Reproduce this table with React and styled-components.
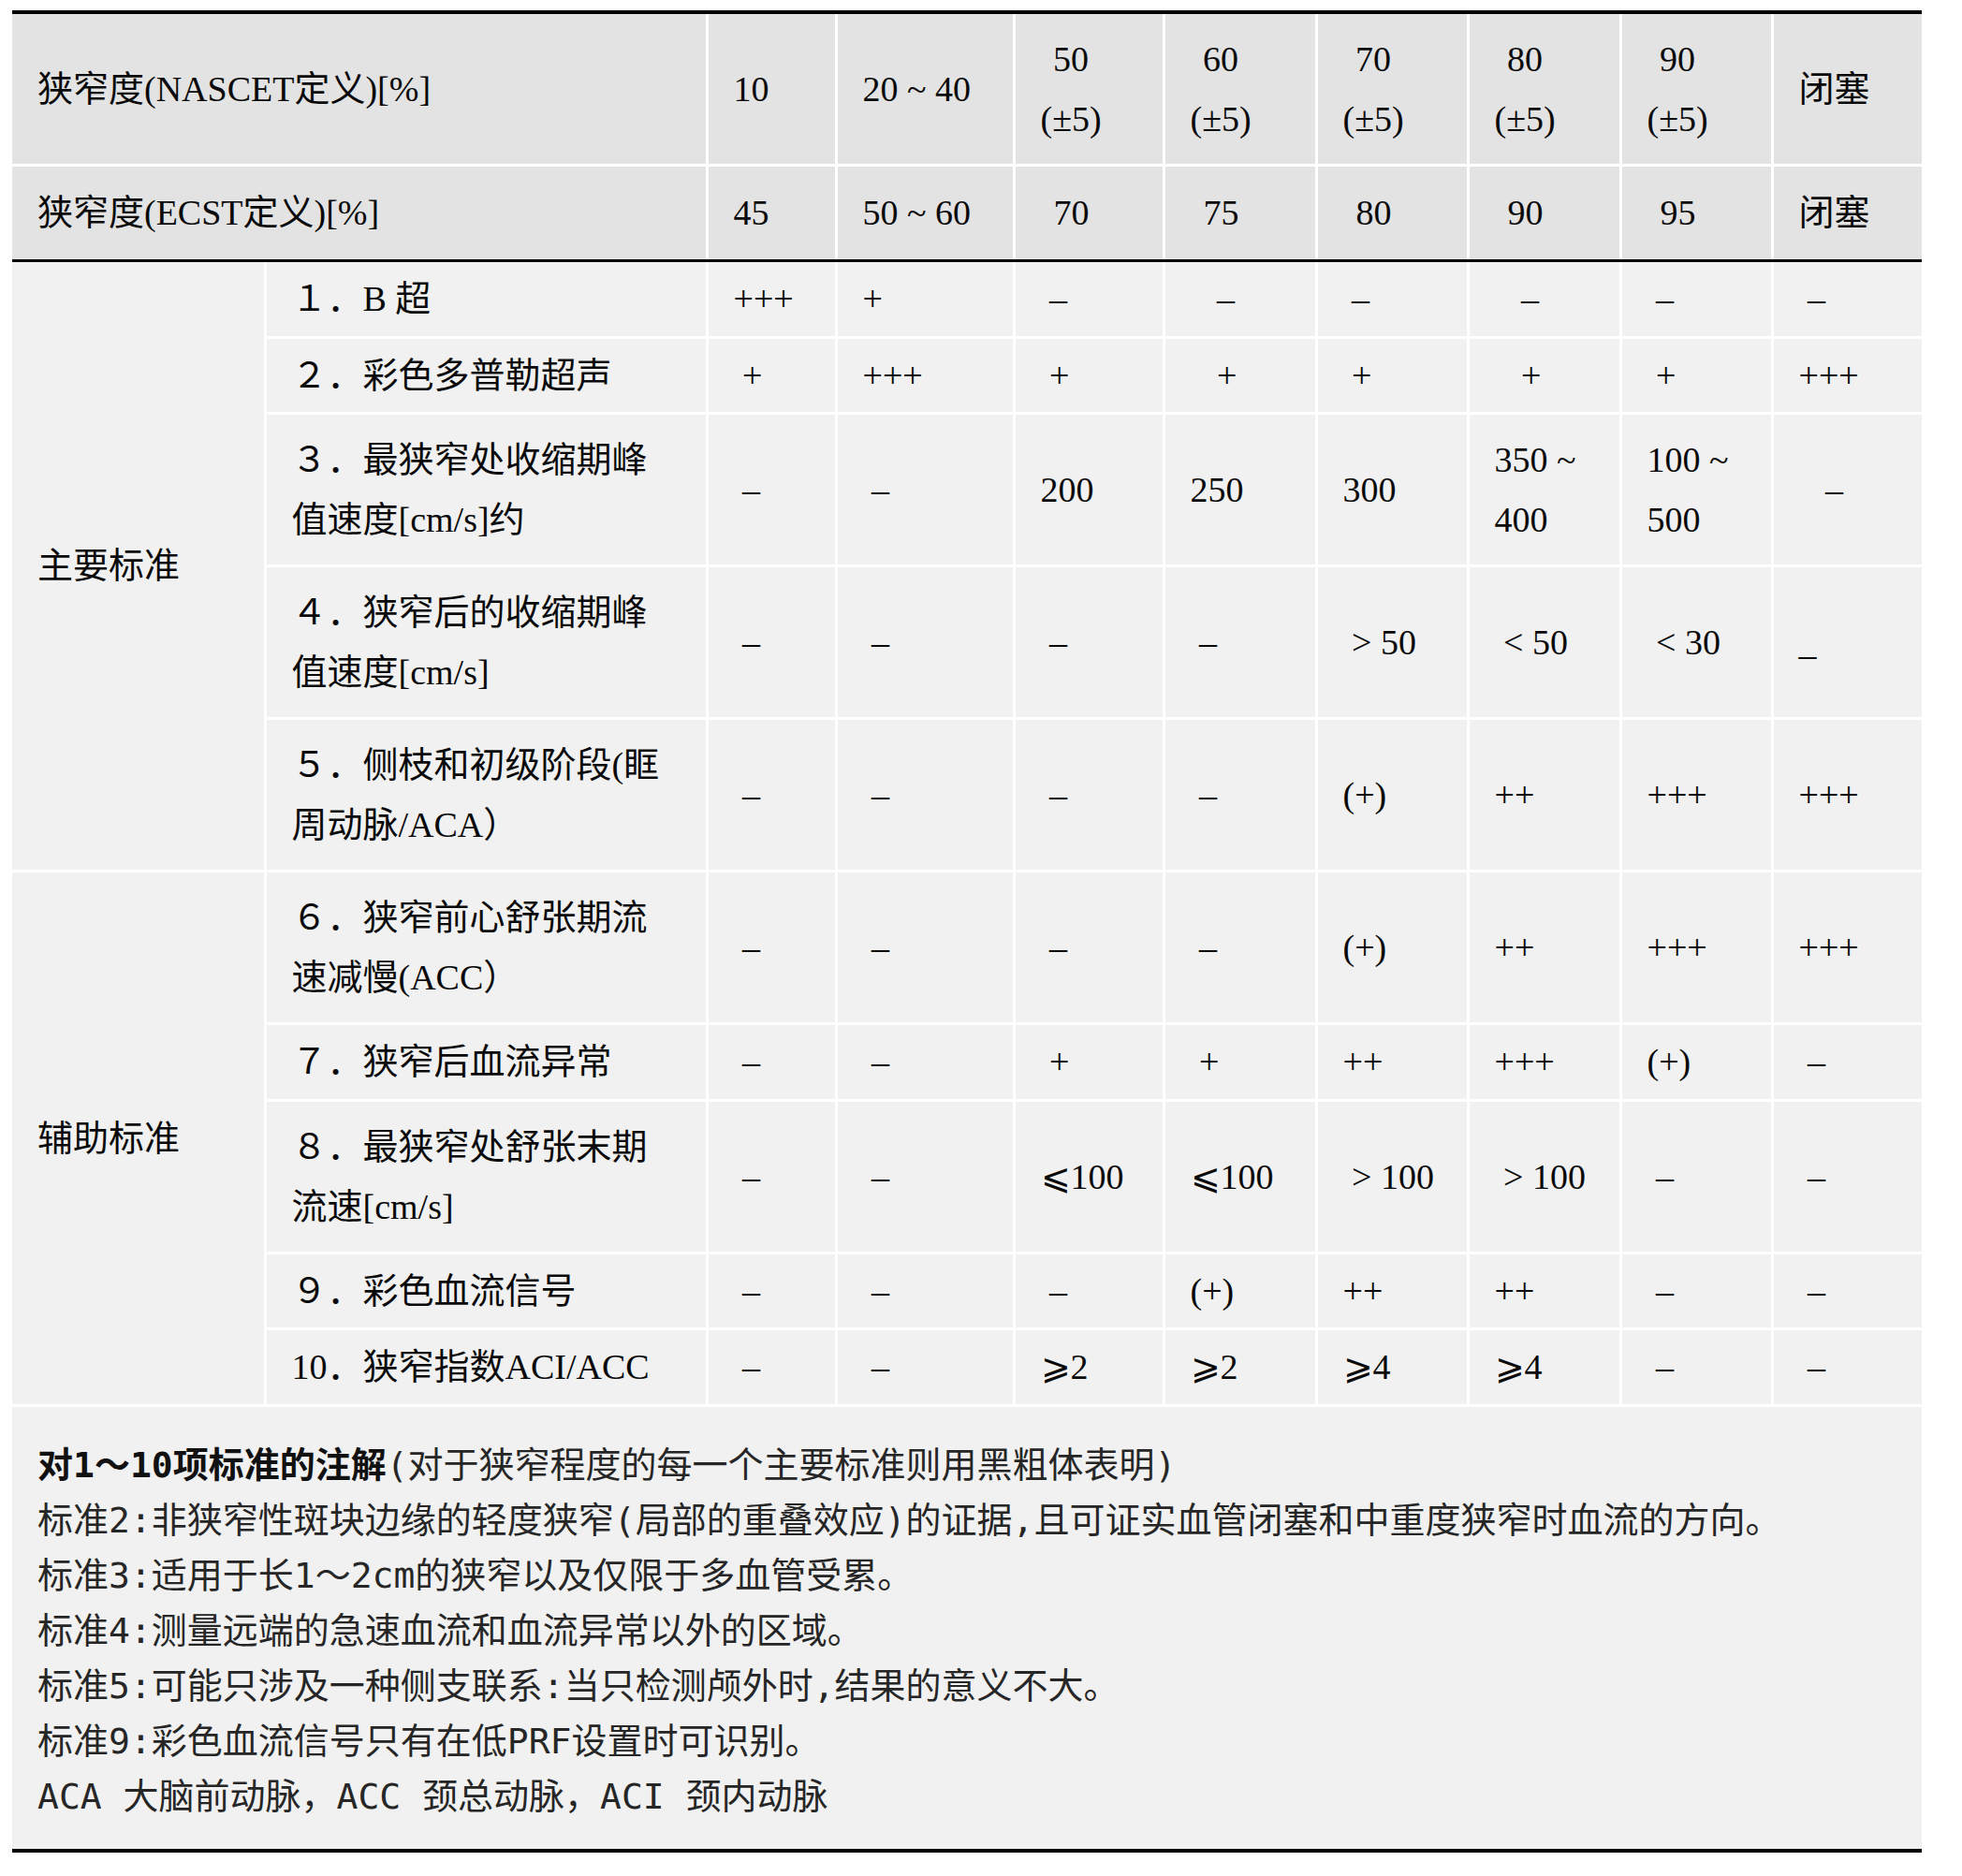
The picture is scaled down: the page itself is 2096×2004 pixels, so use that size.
import React from 'react';
import styled, { createGlobalStyle } from 'styled-components';

const GlobalStyle = createGlobalStyle`
    body {
        margin: 0;
        background: #ffffff;
    }
`;

const Sheet = styled.div`
    padding: 11px 0 0 13px;
    width: 2040px;
`;

const Table = styled.table`
    width: 2040px;
    table-layout: fixed;
    border-collapse: collapse;
    border-top: 4px solid #000;
    border-left: hidden;
    border-right: hidden;
    font-family: "Liberation Serif", "DejaVu Serif", "Noto Sans CJK SC", serif;
    font-size: 38px;
    line-height: 64px;
    color: #0a0a0a;
`;

const Row = styled.tr`
    height: ${(props) => props.height}px;
`;

const Cell = styled.td`
    padding: 0 0 0 27px;
    vertical-align: middle;
    white-space: pre;
    border: 3px solid #ffffff;
    background: ${(props) => (props.head ? '#e3e3e3' : '#f1f1f1')};
    ${(props) => props.divider && 'border-bottom: 3px solid #000;'}
    ${(props) => props.shift && `padding-left: ${props.shift}px;`}
`;

const Stack = styled.span`
    display: inline-flex;
    flex-direction: column;
    align-items: center;
`;

const Notes = styled.div`
    width: 2040px;
    box-sizing: border-box;
    background: #f1f1f1;
    border-bottom: 4px solid #000;
    padding: 33px 27px 26px;
    font-family: "DejaVu Sans Mono", "Noto Sans CJK SC", sans-serif;
    font-size: 38px;
    line-height: 59px;
    color: #262626;
    white-space: pre;
`;

const NoteLine = styled.div``;

const NoteTitle = styled.span`
    font-weight: 700;
    color: #111;
`;

const widths = [270, 472, 138, 190, 160, 163, 162, 163, 162, 160];

const header = [
    {
        label: '狭窄度(NASCET定义)[%]',
        values: ['10', '20 ~ 40', ['50', '(±5)'], ['60', '(±5)'], ['70', '(±5)'], ['80', '(±5)'], ['90', '(±5)'], '闭塞'],
        height: 163,
    },
    {
        label: '狭窄度(ECST定义)[%]',
        values: ['45', '50 ~ 60', '70', '75', '80', '90', '95', '闭塞'],
        height: 102,
    },
];

const groups = [
    {
        name: '主要标准',
        rows: [
            { item: '１．B 超', first: true, values: ['+++', '+', ' –', '   –', ' –', '   –', ' –', ' –'] },
            { item: '２．彩色多普勒超声', values: [' +', '+++', ' +', '   +', ' +', '   +', ' +', '+++'] },
            { item: '３．最狭窄处收缩期峰\n值速度[cm/s]约', tall: true, values: [' –', ' –', '200', '250', '300', '350 ~\n400', '100 ~\n500', '   –'] },
            { item: '４．狭窄后的收缩期峰\n值速度[cm/s]', tall: true, values: [' –', ' –', ' –', ' –', ' > 50', ' < 50', ' < 30', '_'] },
            { item: '５．侧枝和初级阶段(眶\n周动脉/ACA）', tall: true, values: [' –', ' –', ' –', ' –', '(+)', '++', '+++', '+++'] },
        ],
    },
    {
        name: '辅助标准',
        rows: [
            { item: '６．狭窄前心舒张期流\n速减慢(ACC）', tall: true, values: [' –', ' –', ' –', ' –', '(+)', '++', '+++', '+++'] },
            { item: '７．狭窄后血流异常', values: [' –', ' –', ' +', ' +', '++', '+++', '(+)', ' –'] },
            { item: '８．最狭窄处舒张末期\n流速[cm/s]', tall: true, values: [' –', ' –', '⩽100', '⩽100', ' > 100', ' > 100', ' –', ' –'] },
            { item: '９．彩色血流信号', values: [' –', ' –', ' –', '(+)', '++', '++', ' –', ' –'] },
            { item: '10．狭窄指数ACI/ACC', values: [' –', ' –', '⩾2', '⩾2', '⩾4', '⩾4', ' –', ' –'] },
        ],
    },
];

const notes = [
    '标准2:非狭窄性斑块边缘的轻度狭窄(局部的重叠效应)的证据,且可证实血管闭塞和中重度狭窄时血流的方向。',
    '标准3:适用于长1～2cm的狭窄以及仅限于多血管受累。',
    '标准4:测量远端的急速血流和血流异常以外的区域。',
    '标准5:可能只涉及一种侧支联系:当只检测颅外时,结果的意义不大。',
    '标准9:彩色血流信号只有在低PRF设置时可识别。',
    'ACA 大脑前动脉，ACC 颈总动脉，ACI 颈内动脉',
];

const StenosisTable = () => {
    return (
        <Sheet>
            <Table>
                <colgroup>
                    {widths.map((w, i) => <col key={i} style={{ width: w }} />)}
                </colgroup>
                <thead>
                    {header.map((row, r) => (
                        <Row key={r} height={row.height}>
                            <Cell head colSpan={2} divider={r === 1}>{row.label}</Cell>
                            {row.values.map((v, i) => (
                                Array.isArray(v)
                                    ? <Cell head key={i} divider={r === 1}><Stack><span>{v[0]}</span><span>{v[1]}</span></Stack></Cell>
                                    : <Cell head key={i} divider={r === 1} shift={r === 1 && i >= 2 && i <= 6 ? 41 : 0}>{v}</Cell>
                            ))}
                        </Row>
                    ))}
                </thead>
                <tbody>
                    {groups.map((group) => group.rows.map((row, r) => (
                        <Row key={group.name + r} height={row.tall ? 163 : (row.first ? 82 : 81.5)}>
                            {r === 0 ? <Cell rowSpan={group.rows.length}>{group.name}</Cell> : null}
                            <Cell>{row.item}</Cell>
                            {row.values.map((v, i) => <Cell key={i}>{v}</Cell>)}
                        </Row>
                    )))}
                </tbody>
            </Table>
            <Notes>
                <NoteLine><NoteTitle>对1～10项标准的注解</NoteTitle>(对于狭窄程度的每一个主要标准则用黑粗体表明)</NoteLine>
                {notes.map((n, i) => <NoteLine key={i}>{n}</NoteLine>)}
            </Notes>
        </Sheet>
    );
}

export default function App() {
    return (
        <React.Fragment>
            <GlobalStyle />
            <StenosisTable />
        </React.Fragment>
    );
}
